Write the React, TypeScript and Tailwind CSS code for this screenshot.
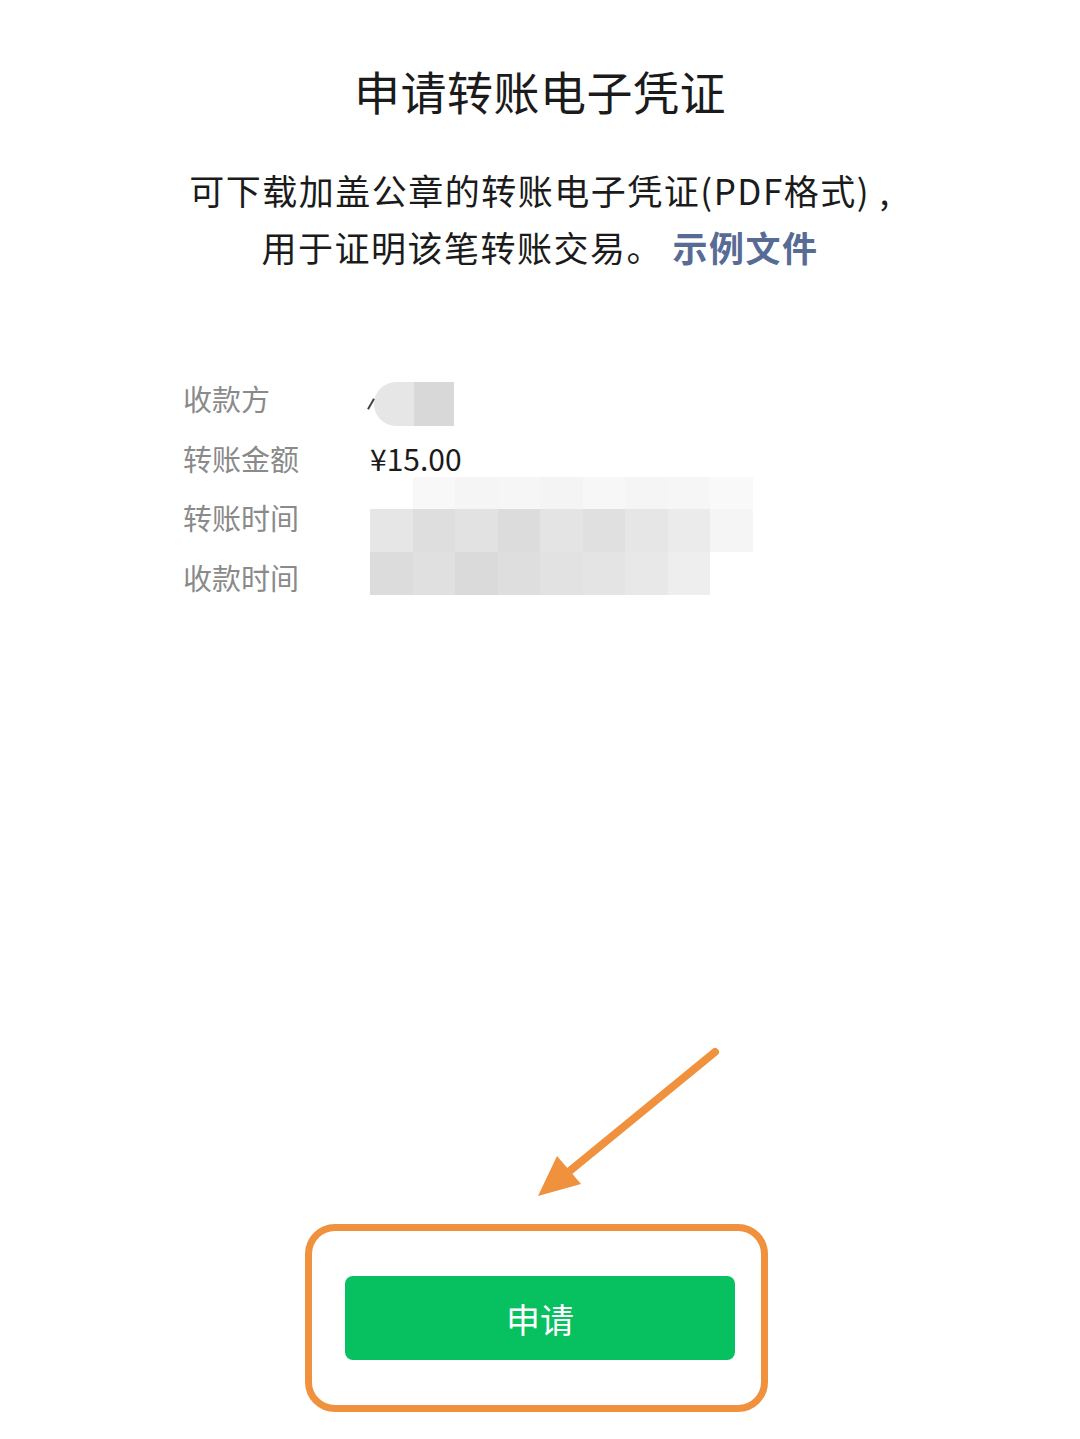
const mosaic = [
  ["#ffffff", "#f8f8f8", "#f5f5f5", "#f6f6f6", "#f4f4f4", "#f7f7f7", "#f5f5f5", "#f6f6f6", "#f9f9f9"],
  ["#e6e6e6", "#dedede", "#e2e2e2", "#dcdcdc", "#e4e4e4", "#e0e0e0", "#e6e6e6", "#ebebeb", "#f5f5f5"],
  ["#dcdcdc", "#e0e0e0", "#dadada", "#dedede", "#e2e2e2", "#e4e4e4", "#e8e8e8", "#eeeeee", "#ffffff"],
]

function Row({ label, children }: { label: string; children?: React.ReactNode }) {
  return (
    <>
      <div className="flex h-[59.5px] items-center text-[29px] text-[#8a8a8a]">{label}</div>
      <div className="flex h-[59.5px] items-center">{children}</div>
    </>
  )
}

export default function App() {
  return (
    <div
      className="flex min-h-[1439px] w-[1080px] flex-col bg-white"
      style={{ fontFamily: '"Noto Sans CJK SC", "Noto Sans", sans-serif' }}
    >
      <h1 className="pt-[58px] text-center text-[46px] leading-[64px] tracking-[0.5px] text-[#1b1b1b]">申请转账电子凭证</h1>

      <p className="mt-[39px] text-center text-[35px] leading-[57px] tracking-[1.5px] text-[#1b1b1b]">
        可下载加盖公章的转账电子凭证(PDF格式)&nbsp;,
        <br />
        用于证明该笔转账交易。&nbsp;<span className="font-bold text-[#576b95]">示例文件</span>
      </p>

      <div className="mt-[94px] grid grid-cols-[187px_1fr] pl-[183px]">
        <Row label="收款方">
          <div className="mt-[10px] flex items-center">
            <div className="mr-[2px] h-[12px] w-[2px] rotate-[30deg] bg-[#444]" />
            <div className="h-[44px] w-[40px] rounded-l-[22px] bg-[#e6e6e6]" />
            <div className="h-[44px] w-[40px] bg-[#d8d8d8]" />
          </div>
        </Row>
        <Row label="转账金额">
          <span className="text-[30px] text-[#1b1b1b]">¥15.00</span>
        </Row>
        <div className="flex h-[59.5px] items-center text-[29px] text-[#8a8a8a]">转账时间</div>
        <div className="row-span-2 flex items-start">
          <div className="-mt-[11px] flex flex-col">
            {mosaic.map((r, i) => (
              <div key={i} className="flex">
                {r.map((c, j) => (
                  <div
                    key={j}
                    className={i === 0 ? "h-[32px] w-[42.5px]" : "h-[43px] w-[42.5px]"}
                    style={{ backgroundColor: c }}
                  />
                ))}
              </div>
            ))}
          </div>
        </div>
        <div className="flex h-[59.5px] items-center text-[29px] text-[#8a8a8a]">收款时间</div>
      </div>

      <div className="relative mt-auto pb-[27px] pl-[305px]">
        <svg
          className="absolute left-[530px] top-[-182px]"
          width="200"
          height="165"
          viewBox="530 1042 200 165"
          fill="none"
        >
          <line x1="715" y1="1052" x2="566" y2="1174" stroke="#f0913e" strokeWidth="8" strokeLinecap="round" />
          <polygon points="538,1196 557,1156 581,1184" fill="#f0913e" />
        </svg>
        <div className="w-[463px] rounded-[30px] border-[7px] border-[#f0913e] py-[45px] pl-[33px]">
          <button className="flex h-[84px] w-[390px] items-center justify-center rounded-[8px] bg-[#07c160] text-[34px] text-white">
            申请
          </button>
        </div>
      </div>
    </div>
  )
}
